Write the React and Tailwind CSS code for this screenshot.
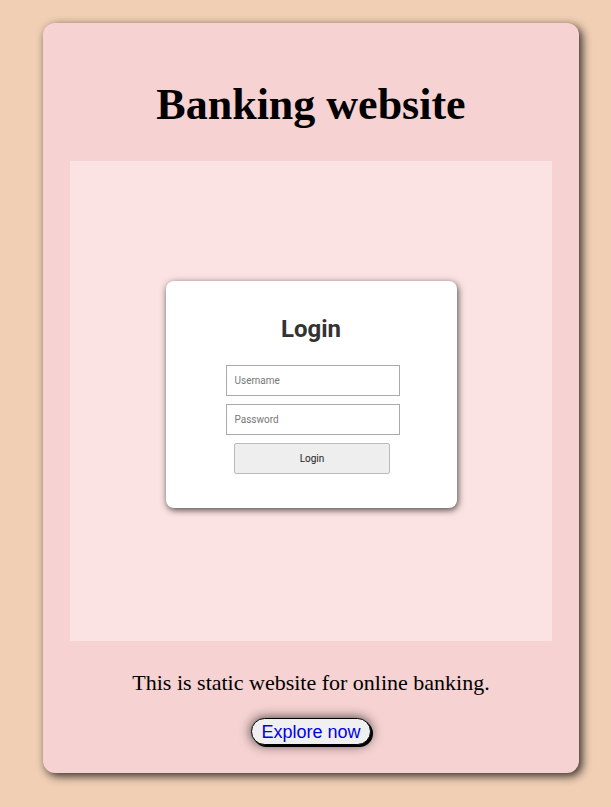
import React from "react";

const LoginPreview = () => {
    return (
        <div className="w-[482px] h-[480px] bg-[#fce3e3] flex items-center justify-center pb-[14px] mx-auto">
            <div className="w-[291px] h-[227px] bg-white rounded-lg shadow-[1px_2px_7px_rgba(0,0,0,0.7)] flex flex-col items-center pt-[33px] font-['Roboto',sans-serif]">
                <h2 className="text-[24px] leading-[30px] font-bold text-[#333]">Login</h2>
                <input
                    type="text"
                    placeholder="Username"
                    className="mt-[21px] ml-[3px] w-[174px] h-[31px] border border-[#aaa] px-[8px] text-[10px] placeholder:text-[#777] outline-none"
                />
                <input
                    type="password"
                    placeholder="Password"
                    className="mt-[8px] ml-[3px] w-[174px] h-[31px] border border-[#aaa] px-[8px] text-[10px] placeholder:text-[#777] outline-none"
                />
                <button className="mt-[8px] ml-[2px] w-[156px] h-[31px] bg-[#eee] border border-[#bbb] rounded-[2px] text-[10px] text-[#222]">
                    Login
                </button>
            </div>
        </div>
    );
};

const App = () => {
    return (
        <div className="min-h-[807px] bg-[#f0cfb4] pt-[23px] pl-[43px]">
            <div className="w-[536px] h-[750px] bg-[#f6d2d2] rounded-[12px] shadow-[3px_3px_10px_rgba(0,0,0,0.8)] flex flex-col items-center pt-[54px] px-[27px] font-['Liberation_Serif',serif]">
                <h1 className="text-[44px] leading-[56px] font-bold text-black">Banking website</h1>
                <div className="mt-[28px]">
                    <LoginPreview />
                </div>
                <p className="mt-[28px] text-[22px] leading-[28px] text-black">
                    This is static website for online banking.
                </p>
                <button className="mt-[21px] h-[27px] px-[9px] rounded-full border border-black bg-[#f0f0f0] shadow-[2px_2px_0_#000,0_0_12px_rgba(0,0,0,0.75)] text-[18px] leading-[22px] text-[#0000ee] font-['Liberation_Sans',sans-serif]">
                    Explore now
                </button>
            </div>
        </div>
    );
};

export default App;
